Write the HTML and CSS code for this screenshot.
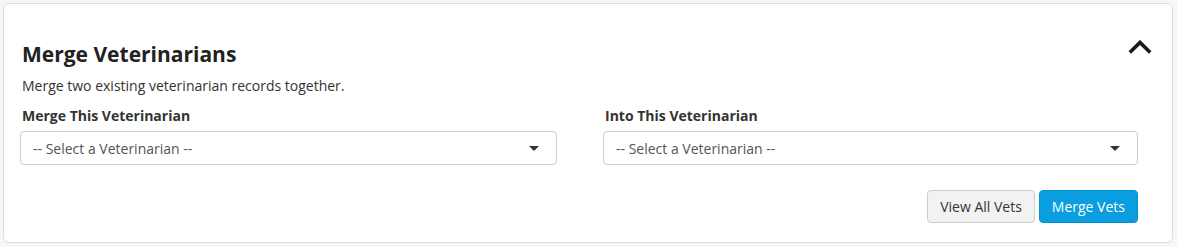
FILE: index.html
```html
<!DOCTYPE html>
<html lang="en">
<head>
<meta charset="utf-8">
<title>Merge Veterinarians</title>
<link rel="stylesheet" href="styles.css">
</head>
<body>
<section class="card">
  <div class="card-header">
    <h1 class="title">Merge Veterinarians</h1>
    <button class="collapse" aria-label="Collapse">
      <svg width="24" height="14" viewBox="0 0 24 14"><polyline points="1.8,12.6 12,2.4 22.2,12.6" fill="none" stroke="#1a1a1a" stroke-width="3.6"/></svg>
    </button>
  </div>
  <div class="card-body">
    <p class="desc">Merge two existing veterinarian records together.</p>
    <div class="fields">
      <div class="field">
        <label class="label">Merge This Veterinarian</label>
        <div class="select"><span>-- Select a Veterinarian --</span><i class="caret"></i></div>
      </div>
      <div class="field">
        <label class="label">Into This Veterinarian</label>
        <div class="select"><span>-- Select a Veterinarian --</span><i class="caret"></i></div>
      </div>
    </div>
    <div class="actions">
      <button class="btn btn-default">View All Vets</button>
      <button class="btn btn-primary">Merge Vets</button>
    </div>
  </div>
</section>
</body>
</html>
```
FILE: styles.css
```css
html, body {
  margin: 0;
  padding: 0;
  background: #f7f7f7;
  font-family: "Open Sans", "Liberation Sans", sans-serif;
  color: #333;
}
body {
  padding: 3px 4px 0 3px;
}
.card {
  box-sizing: border-box;
  height: 240px;
  background: #fff;
  border: 1px solid #dcdcdc;
  border-radius: 6px;
  padding: 36px 20px 0 16px;
}
.card-header {
  display: flex;
  justify-content: space-between;
  align-items: flex-start;
}
.title {
  margin: 0;
  padding-left: 2px;
  font-size: 21px;
  line-height: 28px;
  font-weight: 700;
  color: #222;
}
.collapse {
  border: 0;
  background: none;
  padding: 0;
  margin: 0;
  display: flex;
}
.card-body {
  margin-right: 14px;
}
.desc {
  margin: 8px 0 0;
  padding-left: 2px;
  font-size: 14px;
  line-height: 20px;
}
.fields {
  display: grid;
  grid-template-columns: 537px 1fr;
  column-gap: 46px;
  margin-top: 10px;
}
.label {
  display: block;
  padding-left: 2px;
  font-size: 14px;
  font-weight: 700;
  line-height: 20px;
  margin-bottom: 5px;
}
.select {
  box-sizing: border-box;
  height: 34px;
  border: 1px solid #ccc;
  border-radius: 4px;
  display: flex;
  align-items: center;
  justify-content: space-between;
  padding: 0 17px 0 12px;
  font-size: 14px;
  color: #555;
}
.caret {
  width: 0;
  height: 0;
  border-left: 5px solid transparent;
  border-right: 5px solid transparent;
  border-top: 5px solid #333;
}
.actions {
  display: flex;
  justify-content: flex-end;
  gap: 4px;
  margin-top: 25px;
}
.btn {
  box-sizing: border-box;
  height: 33px;
  border-radius: 4px;
  font-family: inherit;
  font-size: 14px;
  padding: 0 12px;
  cursor: pointer;
}
.btn-default {
  background: #f2f2f2;
  border: 1px solid #ccc;
  color: #333;
}
.btn-primary {
  background: #0a9de0;
  border: 1px solid #0891d0;
  color: #fff;
}
```
